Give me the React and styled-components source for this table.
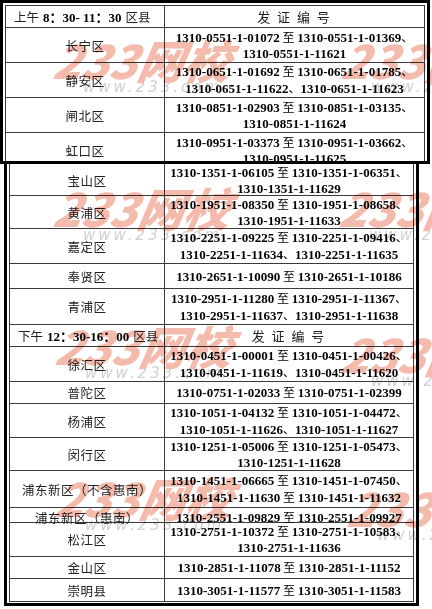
import React from "react";
import styled, { createGlobalStyle } from "styled-components";

const Global = createGlobalStyle`
  html, body { margin: 0; padding: 0; background: #fff; }
  body { width: 432px; height: 609px; overflow: hidden; }
`;

const Page = styled.div`
  position: relative;
  width: 432px;
  height: 609px;
  display: flex;
  flex-direction: column;
  align-items: flex-start;
  overflow: hidden;
  background: #fff;
`;

const Frame = styled.div`
  box-sizing: border-box;
  width: ${(p) => p.$w}px;
  height: ${(p) => p.$h}px;
  margin-left: ${(p) => p.$ml || 0}px;
  border: 3px solid #000;
  border-top-width: ${(p) => (p.$noTop ? 0 : 3)}px;
  padding: ${(p) => (p.$noTop ? "0 2px 2px 2px" : "2px")};
  overflow: hidden;
`;

const Grid = styled.div`
  border: 1px solid #3a3a3a;
  border-top-width: ${(p) => (p.$noTop ? 0 : 1)}px;
  display: flex;
  flex-direction: column;
`;

const Row = styled.div`
  box-sizing: border-box;
  height: ${(p) => p.$h}px;
  display: grid;
  grid-template-columns: ${(p) => p.$left}px 1fr;
  border-bottom: 1px solid #3a3a3a;
  flex-shrink: 0;
  &:last-child { border-bottom: 0; }
`;

const NameCell = styled.div`
  border-right: 1px solid #3a3a3a;
  display: flex;
  align-items: center;
  justify-content: center;
  font-family: "Noto Sans CJK SC", "Liberation Serif", serif;
  font-size: 12.5px;
  letter-spacing: 0.5px;
  color: #222;
  white-space: nowrap;
`;

const HeadCell = styled.div`
  border-right: 1px solid #3a3a3a;
  display: flex;
  align-items: center;
  padding-left: 8px;
  font-family: "Noto Sans CJK SC", serif;
  font-size: 12.5px;
  color: #222;
  white-space: nowrap;
`;

const Num = styled.span`
  font-family: "Liberation Serif", "Noto Sans CJK SC", serif;
  font-weight: 700;
  font-size: 13px;
  color: #000;
  margin: 0 4px;
`;

const HeadRight = styled.div`
  display: flex;
  align-items: center;
  justify-content: center;
  font-family: "Noto Sans CJK SC", serif;
  font-size: 13px;
  letter-spacing: 2px;
  color: #222;
  white-space: pre;
`;

const NumCell = styled.div`
  display: flex;
  flex-direction: column;
  align-items: center;
  justify-content: center;
  font-family: "Liberation Serif", "Noto Sans CJK SC", serif;
  font-weight: 700;
  font-size: 13px;
  line-height: 16px;
  color: #000;
  white-space: nowrap;
`;

const Line = styled.div``;

const Soft = styled.span`
  font-family: "Noto Sans CJK SC", serif;
  font-weight: 400;
  font-size: 12px;
`;

const Layer = styled.div`
  position: absolute;
  inset: 0;
  pointer-events: none;
  mix-blend-mode: multiply;
`;

const Mark = styled.div`
  position: absolute;
  white-space: nowrap;
`;

const MarkBig = styled.div`
  font-family: "Noto Sans CJK SC", sans-serif;
  font-weight: 900;
  font-style: italic;
  font-size: 46px;
  line-height: 1;
  color: #f4baac;
  transform: skewX(-10deg);
`;

const MarkSmall = styled.div`
  margin-left: 28px;
  margin-top: -4px;
  font-family: "DejaVu Sans", sans-serif;
  font-style: italic;
  font-size: 15px;
  letter-spacing: 3px;
  color: #d0d0d0;
`;

function renderText(t) {
  const parts = t.split(/(至|、)/);
  return parts.map((p, i) =>
    p === "至" || p === "、" ? (
      <Soft key={i}>{p === "至" ? " 至 " : "、"}</Soft>
    ) : (
      <React.Fragment key={i}>{p}</React.Fragment>
    )
  );
}

const topRows = [
  ["长宁区", 35, ["1310-0551-1-01072至1310-0551-1-01369、", "1310-0551-1-11621"]],
  ["静安区", 35, ["1310-0651-1-01692至1310-0651-1-01785、", "1310-0651-1-11622、1310-0651-1-11623"]],
  ["闸北区", 35, ["1310-0851-1-02903至1310-0851-1-03135、", "1310-0851-1-11624"]],
  ["虹口区", 35, ["1310-0951-1-03373至1310-0951-1-03662、", "1310-0951-1-11625"]],
];

const bottomRows = [
  ["宝山区", 32, ["1310-1351-1-06105至1310-1351-1-06351、", "1310-1351-1-11629"]],
  ["黄浦区", 33, ["1310-1951-1-08350至1310-1951-1-08658、", "1310-1951-1-11633"]],
  ["嘉定区", 35, ["1310-2251-1-09225至1310-2251-1-09416、", "1310-2251-1-11634、1310-2251-1-11635"]],
  ["奉贤区", 25, ["1310-2651-1-10090至1310-2651-1-10186"]],
  ["青浦区", 36, ["1310-2951-1-11280至1310-2951-1-11367、", "1310-2951-1-11637、1310-2951-1-11638"]],
  ["HEAD", 22, ["下午", "12：30-16：00", "区县"]],
  ["徐汇区", 35, ["1310-0451-1-00001至1310-0451-1-00426、", "1310-0451-1-11619、1310-0451-1-11620"]],
  ["普陀区", 22, ["1310-0751-1-02033至1310-0751-1-02399"]],
  ["杨浦区", 34, ["1310-1051-1-04132至1310-1051-1-04472、", "1310-1051-1-11626、1310-1051-1-11627"]],
  ["闵行区", 33, ["1310-1251-1-05006至1310-1251-1-05473、", "1310-1251-1-11628"]],
  ["浦东新区（不含惠南）", 37, ["1310-1451-1-06665至1310-1451-1-07450、", "1310-1451-1-11630至1310-1451-1-11632"]],
  ["浦东新区（惠南）", 15, ["1310-2551-1-09829至1310-2551-1-09927"]],
  ["松江区", 34, ["1310-2751-1-10372至1310-2751-1-10583、", "1310-2751-1-11636"]],
  ["金山区", 22, ["1310-2851-1-11078至1310-2851-1-11152"]],
  ["崇明县", 22, ["1310-3051-1-11577至1310-3051-1-11583"]],
];

function Header({ left, a, b, c }) {
  return (
    <Row $h={22} $left={left}>
      <HeadCell>
        {a}<Num>{b}</Num>{c}
      </HeadCell>
      <HeadRight>发 证 编 号</HeadRight>
    </Row>
  );
}

function DataRow({ left, name, h, lines }) {
  return (
    <Row $h={h} $left={left}>
      <NameCell>{name}</NameCell>
      <NumCell>
        {lines.map((l, i) => (
          <Line key={i}>{renderText(l)}</Line>
        ))}
      </NumCell>
    </Row>
  );
}

const marks = [
  [55, 36], [343, 36],
  [55, 184], [341, 184],
  [57, 322], [343, 330],
  [57, 474], [349, 484],
];

export default function App() {
  return (
    <Page>
      <Global />
      <Frame $w={430} $h={164}>
        <Grid>
          <Header left={159} a="上午" b="8：30- 11：30" c="区县" />
          {topRows.map(([n, h, l]) => (
            <DataRow key={n} left={159} name={n} h={h} lines={l} />
          ))}
        </Grid>
      </Frame>
      <Frame $w={415} $h={442} $ml={4} $noTop>
        <Grid $noTop>
          {bottomRows.map(([n, h, l]) =>
            n === "HEAD" ? (
              <Header key={n} left={155} a={l[0]} b={l[1]} c={l[2]} />
            ) : (
              <DataRow key={n} left={155} name={n} h={h} lines={l} />
            )
          )}
        </Grid>
      </Frame>
      <Layer>
        {marks.map(([x, y], i) => (
          <Mark key={i} style={{ left: x, top: y }}>
            <MarkBig>233网校</MarkBig>
            <MarkSmall>www.233.com</MarkSmall>
          </Mark>
        ))}
      </Layer>
    </Page>
  );
}
